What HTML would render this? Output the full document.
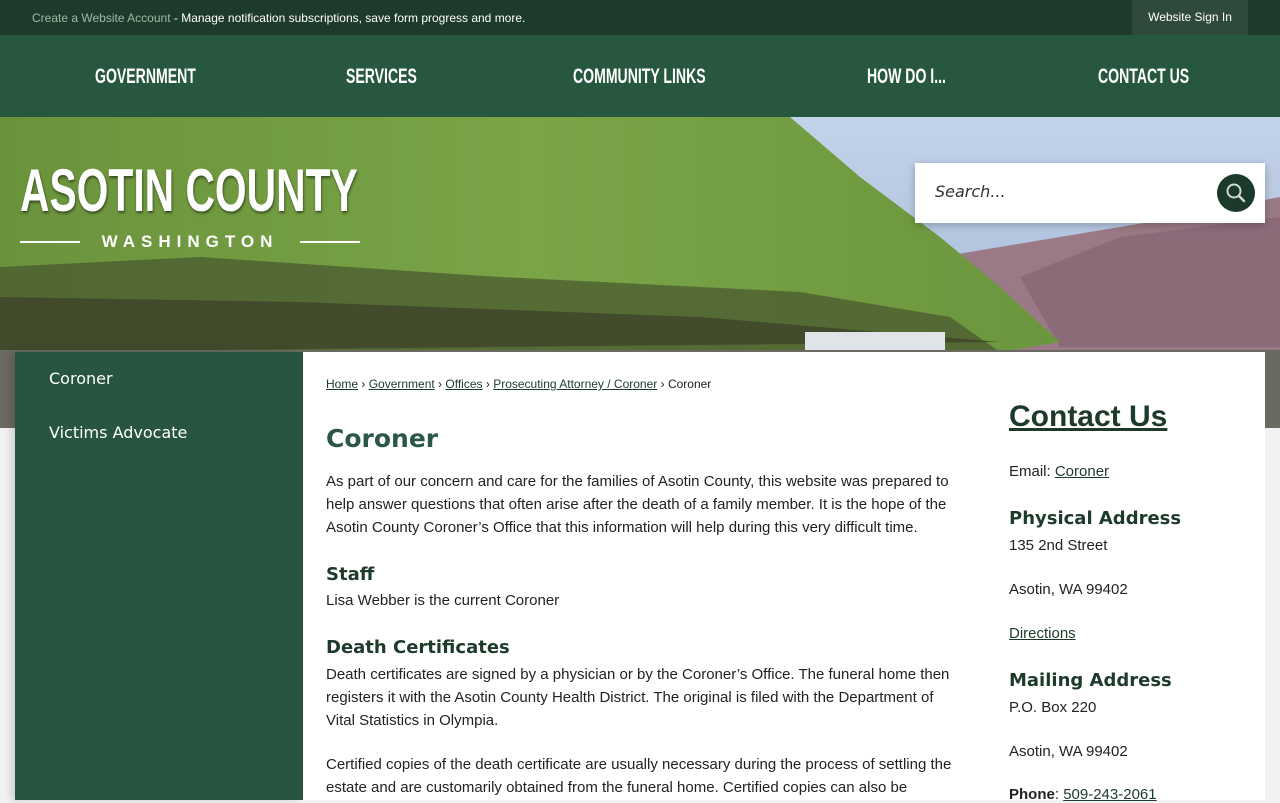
<!DOCTYPE html>
<html><head><meta charset="utf-8"><style>
*{margin:0;padding:0;box-sizing:border-box}
body{width:1280px;height:800px;overflow:hidden;background:#f2f2f2;font-family:"Liberation Sans",Arial,sans-serif;position:relative}
.top{position:absolute;top:0;left:0;width:1280px;height:35px;background:#1d3a2b;color:#fff;font-size:12px}
.top .msg{position:absolute;left:32px;top:11px}
.top .msg span{color:#9fb8a8}
.top .sign{position:absolute;left:1132px;top:0;width:116px;height:35px;background:#2f4a3c;text-align:center;line-height:35px;font-size:12px}
.nav{position:absolute;top:35px;left:0;width:1280px;height:82px;background:#27573f}
.nav div{position:absolute;top:30px;color:#fff;font-weight:bold;font-size:21px;transform:scaleX(0.67);transform-origin:left}
.hero{position:absolute;top:117px;left:0;width:1280px;height:311px;overflow:hidden}
.logo{position:absolute;left:20px;top:160px;color:#fff;width:340px}
.logo .t{font-weight:bold;font-size:60px;line-height:62px;transform:scaleX(0.68);transform-origin:left;white-space:nowrap;text-shadow:1px 2px 3px rgba(0,0,0,.5)}
.logo .w{position:absolute;top:72px;left:0;width:340px;font-size:17px;letter-spacing:6px;text-align:center;font-weight:bold}
.logo .l1,.logo .l2{position:absolute;top:81px;height:2px;background:#fff;width:60px}
.search{position:absolute;left:915px;top:163px;width:350px;height:60px;background:#fff;box-shadow:0 2px 8px rgba(0,0,0,.25)}
.search .p{position:absolute;left:20px;top:19px;font-family:"DejaVu Sans",sans-serif;font-style:italic;font-size:16px;color:#333}
.search .b{position:absolute;left:302px;top:11px;width:38px;height:38px;border-radius:50%;background:#1c3a2b}
.side{position:absolute;left:15px;top:352px;width:288px;height:448px;background:#27553f;box-shadow:-4px 0 8px rgba(0,0,0,.15)}
.side div{position:absolute;left:34px;color:#fff;font-family:"DejaVu Sans",sans-serif;font-size:16px}
.main{position:absolute;left:303px;top:352px;width:962px;height:448px;background:#fff}
.bc{position:absolute;left:23px;top:25px;font-size:12px;color:#222}
.bc a{color:#1d3a2b;text-decoration:underline}
h1{position:absolute;left:23px;top:72px;font-family:"DejaVu Sans",sans-serif;font-size:25px;color:#2b5744;font-weight:bold}
.txt{position:absolute;left:23px;width:640px;font-size:15px;line-height:23px;color:#222}
h2{position:absolute;left:23px;font-family:"DejaVu Sans",sans-serif;font-size:18px;color:#1d3a2b;font-weight:bold}
.r{position:absolute;left:706px;font-size:15px;color:#222}
.r a{color:#1d3a2b}
.r h3{font-family:"DejaVu Sans",sans-serif;font-size:18px;color:#1d3a2b}
</style></head><body>
<div class="top"><div class="msg"><span>Create a Website Account</span> - Manage notification subscriptions, save form progress and more.</div><div class="sign">Website Sign In</div></div>
<div class="nav">
<div style="left:95px">GOVERNMENT</div><div style="left:346px">SERVICES</div><div style="left:573px">COMMUNITY LINKS</div><div style="left:867px">HOW DO I...</div><div style="left:1098px">CONTACT US</div>
</div>
<div class="hero"><svg width="1280" height="311" viewBox="0 0 1280 311">
<defs><linearGradient id="sky" x1="0" y1="0" x2="0" y2="1"><stop offset="0" stop-color="#c3d3ea"/><stop offset="1" stop-color="#9fb2cf"/></linearGradient>
<linearGradient id="g" x1="0" y1="0" x2="1" y2="0"><stop offset="0" stop-color="#6a933c"/><stop offset=".5" stop-color="#7aa446"/><stop offset="1" stop-color="#6c963e"/></linearGradient></defs>
<rect width="1280" height="311" fill="url(#sky)"/>
<path d="M940 140 L1030 125 L1150 105 L1280 80 L1280 240 L940 240Z" fill="#9a7a86"/>
<path d="M1020 160 L1120 120 L1280 100 L1280 230 L1060 230Z" fill="#8c6b79"/>
<path d="M0 0 L790 0 L860 60 L940 120 L1000 170 L1060 225 L1000 235 L0 235Z" fill="url(#g)"/>
<path d="M0 150 L200 140 L500 160 L800 175 L950 200 L1000 235 L0 235Z" fill="#4a5a30" opacity=".75"/>
<path d="M0 180 L300 185 L700 200 L1000 225 L0 235Z" fill="#3a3f2a" opacity=".7"/>
<rect y="233" width="1280" height="78" fill="#6a6a62"/>
<rect x="805" y="215" width="140" height="18" fill="#dfe4e8"/>
</svg></div>
<div class="logo"><div class="t">ASOTIN COUNTY</div><div class="l1" style="left:0"></div><div class="w">WASHINGTON</div><div class="l2" style="left:280px"></div></div>
<div class="search"><div class="p">Search...</div><div class="b"><svg width="38" height="38" viewBox="0 0 38 38"><circle cx="17" cy="17" r="6.5" fill="none" stroke="#cfd8d2" stroke-width="2"/><path d="M22 22l5 5" stroke="#cfd8d2" stroke-width="2.5" stroke-linecap="round"/></svg></div></div>
<div class="side"><div style="top:17px">Coroner</div><div style="top:71px">Victims Advocate</div></div>
<div class="main">
<div class="bc"><a>Home</a> › <a>Government</a> › <a>Offices</a> › <a>Prosecuting Attorney / Coroner</a> › Coroner</div>
<h1>Coroner</h1>
<div class="txt" style="top:118px">As part of our concern and care for the families of Asotin County, this website was prepared to help answer questions that often arise after the death of a family member. It is the hope of the Asotin County Coroner’s Office that this information will help during this very difficult time.</div>
<h2 style="top:212px">Staff</h2>
<div class="txt" style="top:237px">Lisa Webber is the current Coroner</div>
<h2 style="top:285px">Death Certificates</h2>
<div class="txt" style="top:311px">Death certificates are signed by a physician or by the Coroner’s Office. The funeral home then registers it with the Asotin County Health District. The original is filed with the Department of Vital Statistics in Olympia.</div>
<div class="txt" style="top:401px">Certified copies of the death certificate are usually necessary during the process of settling the estate and are customarily obtained from the funeral home. Certified copies can also be</div>
<div class="r" style="top:48px;font-size:30px;font-weight:bold"><a style="text-decoration:underline">Contact Us</a></div>
<div class="r" style="top:111px">Email: <a style="text-decoration:underline">Coroner</a></div>
<div class="r" style="top:156px"><h3>Physical Address</h3></div>
<div class="r" style="top:185px">135 2nd Street</div>
<div class="r" style="top:229px">Asotin, WA 99402</div>
<div class="r" style="top:273px"><a style="text-decoration:underline">Directions</a></div>
<div class="r" style="top:318px"><h3>Mailing Address</h3></div>
<div class="r" style="top:347px">P.O. Box 220</div>
<div class="r" style="top:391px">Asotin, WA 99402</div>
<div class="r" style="top:434px"><b>Phone</b>: <a style="text-decoration:underline">509-243-2061</a></div>
</div>
</body></html>
